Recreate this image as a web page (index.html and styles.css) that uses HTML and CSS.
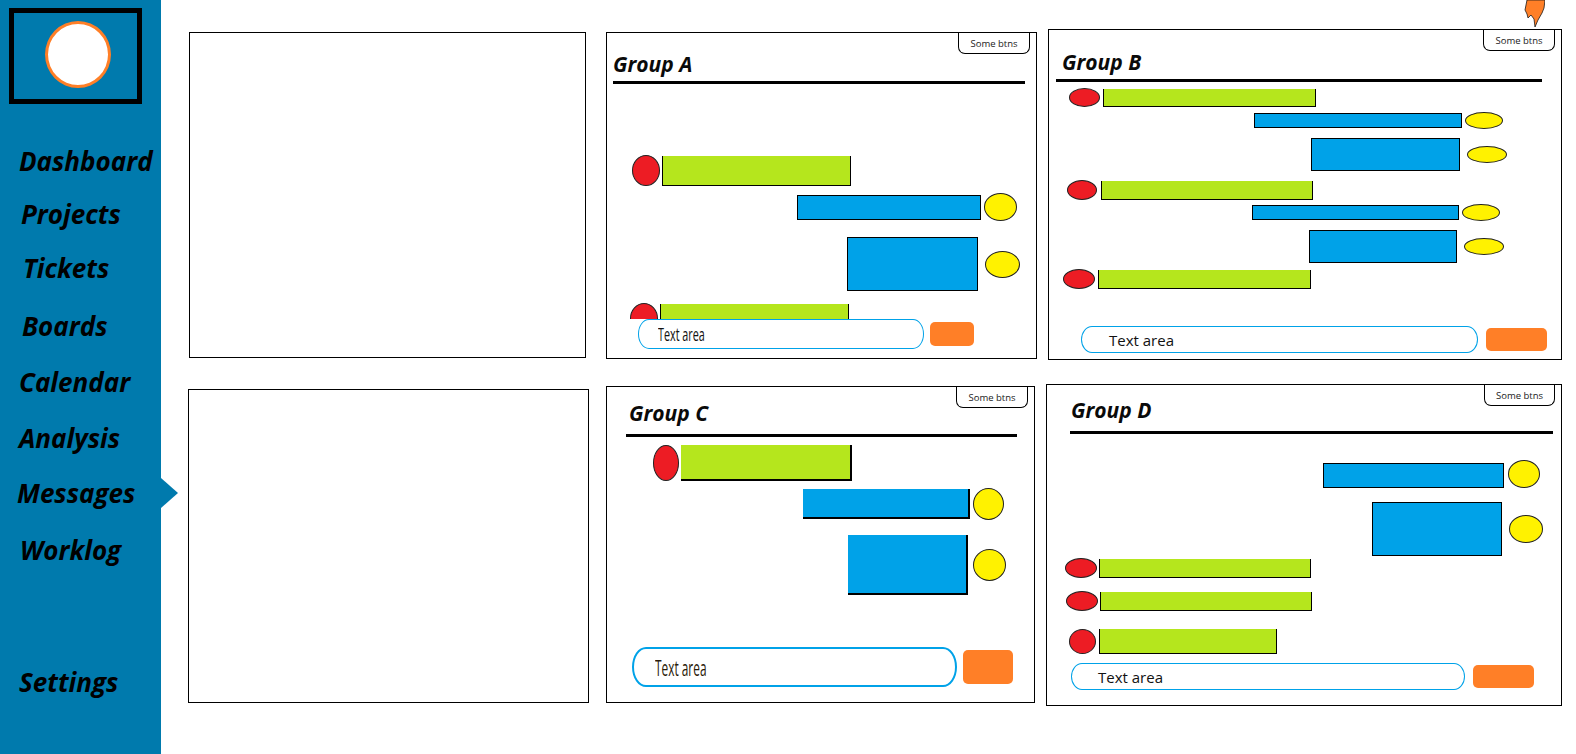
FILE: index.html
```html
<!DOCTYPE html>
<html lang="en">
<head>
<meta charset="utf-8">
<title>Messages</title>
<link rel="stylesheet" href="styles.css">
</head>
<body>
<div class="app">
  <aside class="sidebar">
    <div class="logo"><div class="logo-circle"></div></div>
    <nav class="nav">
      <a class="nav-item">Dashboard</a>
      <a class="nav-item nav-projects">Projects</a>
      <a class="nav-item nav-tickets">Tickets</a>
      <a class="nav-item nav-boards">Boards</a>
      <a class="nav-item">Calendar</a>
      <a class="nav-item">Analysis</a>
      <a class="nav-item nav-messages active">Messages</a>
      <a class="nav-item nav-worklog">Worklog</a>
      <a class="nav-item nav-settings">Settings</a>
    </nav>
  </aside>

  <main class="main">
    <div class="row">
      <section class="panel p-blank1"></section>

      <section class="panel group p-a">
        <div class="tab">Some btns</div>
        <h2 class="title">Group A</h2>
        <div class="rule"></div>
        <div class="msgs">
          <div class="msg" style="--t:71px;--l:25px;--g:2px"><span class="dot red" style="--w:28px;--h:31px"></span><span class="bar green" style="--w:189px;--h:30px"></span></div>
          <div class="msg" style="--t:7px;--l:190px;--g:3px"><span class="bar blue" style="--w:184px;--h:25px"></span><span class="dot yellow" style="--w:33px;--h:28px"></span></div>
          <div class="msg" style="--t:16px;--l:240px;--g:7px"><span class="bar blue" style="--w:131px;--h:54px"></span><span class="dot yellow" style="--w:35px;--h:27px"></span></div>
          <div class="msg" style="--t:12px;--l:23px;--g:2px"><span class="dot red" style="--w:28px;--h:31px"></span><span class="bar green" style="--w:189px;--h:30px"></span></div>
        </div>
        <div class="composer">
          <div class="textarea"><span class="ta-text squeeze">Text area</span></div>
          <div class="send"></div>
        </div>
      </section>

      <section class="panel group p-b">
        <div class="tab">Some btns</div>
        <h2 class="title">Group B</h2>
        <div class="rule"></div>
        <div class="msgs">
          <div class="msg" style="--t:6px;--l:20px;--g:3px"><span class="dot red" style="--w:31px;--h:19px"></span><span class="bar green" style="--w:213px;--h:18px"></span></div>
          <div class="msg" style="--t:5px;--l:205px;--g:3px"><span class="bar blue" style="--w:208px;--h:15px"></span><span class="dot yellow" style="--w:38px;--h:17px"></span></div>
          <div class="msg" style="--t:9px;--l:262px;--g:7px"><span class="bar blue" style="--w:149px;--h:33px"></span><span class="dot yellow" style="--w:40px;--h:17px"></span></div>
          <div class="msg" style="--t:9px;--l:18px;--g:4px"><span class="dot red" style="--w:30px;--h:20px"></span><span class="bar green" style="--w:212px;--h:19px"></span></div>
          <div class="msg" style="--t:4px;--l:203px;--g:3px"><span class="bar blue" style="--w:207px;--h:15px"></span><span class="dot yellow" style="--w:38px;--h:17px"></span></div>
          <div class="msg" style="--t:9px;--l:260px;--g:7px"><span class="bar blue" style="--w:148px;--h:33px"></span><span class="dot yellow" style="--w:40px;--h:17px"></span></div>
          <div class="msg" style="--t:6px;--l:14px;--g:3px"><span class="dot red" style="--w:32px;--h:20px"></span><span class="bar green" style="--w:213px;--h:19px"></span></div>
        </div>
        <div class="composer">
          <div class="textarea"><span class="ta-text">Text area</span></div>
          <div class="send"></div>
        </div>
      </section>
    </div>

    <div class="row">
      <section class="panel p-blank2"></section>

      <section class="panel group p-c">
        <div class="tab">Some btns</div>
        <h2 class="title">Group C</h2>
        <div class="rule"></div>
        <div class="msgs">
          <div class="msg" style="--t:8px;--l:46px;--g:2px"><span class="dot red" style="--w:26px;--h:36px"></span><span class="bar green thick" style="--w:171px;--h:36px"></span></div>
          <div class="msg" style="--t:7px;--l:196px;--g:3px"><span class="bar blue thick" style="--w:167px;--h:30px"></span><span class="dot yellow" style="--w:31px;--h:32px"></span></div>
          <div class="msg" style="--t:15px;--l:241px;--g:5px"><span class="bar blue thick" style="--w:120px;--h:60px"></span><span class="dot yellow" style="--w:33px;--h:32px"></span></div>
        </div>
        <div class="composer">
          <div class="textarea"><span class="ta-text squeeze">Text area</span></div>
          <div class="send"></div>
        </div>
      </section>

      <section class="panel group p-d">
        <div class="tab">Some btns</div>
        <h2 class="title">Group D</h2>
        <div class="rule"></div>
        <div class="msgs">
          <div class="msg" style="--t:25px;--l:276px;--g:4px"><span class="bar blue low" style="--w:181px;--h:25px"></span><span class="dot yellow" style="--w:32px;--h:28px"></span></div>
          <div class="msg" style="--t:14px;--l:325px;--g:7px"><span class="bar blue" style="--w:130px;--h:54px"></span><span class="dot yellow" style="--w:34px;--h:28px"></span></div>
          <div class="msg" style="--t:2px;--l:18px;--g:2px"><span class="dot red" style="--w:32px;--h:20px"></span><span class="bar green" style="--w:212px;--h:19px"></span></div>
          <div class="msg" style="--t:13px;--l:19px;--g:2px"><span class="dot red" style="--w:32px;--h:20px"></span><span class="bar green" style="--w:212px;--h:19px"></span></div>
          <div class="msg" style="--t:18px;--l:22px;--g:3px"><span class="dot red" style="--w:27px;--h:25px"></span><span class="bar green" style="--w:178px;--h:25px"></span></div>
        </div>
        <div class="composer">
          <div class="textarea"><span class="ta-text">Text area</span></div>
          <div class="send"></div>
        </div>
      </section>
    </div>
  </main>

  <svg class="flame" width="22" height="27" viewBox="0 0 22 27" aria-hidden="true">
    <path d="M4 0 L22 0 L21 8 L19 13 L15 20 L12 27 L11 19 L8 15 L5 18 L4 14 L2 10 Z" fill="#ff7f27" stroke="#1a1a1a" stroke-width="0.8"/>
  </svg>
</div>
</body>
</html>
```

FILE: styles.css
```css
html, body {
  margin: 0;
  padding: 0;
  background: #fff;
}

.app {
  position: relative;
  display: flex;
  width: 1576px;
  height: 754px;
  overflow: hidden;
  font-family: "Open Sans", "Noto Sans", sans-serif;
  color: #000;
}

/* ---------- sidebar ---------- */
.sidebar {
  flex: none;
  width: 161px;
  height: 754px;
  background: #007aad;
  display: flex;
  flex-direction: column;
}

.logo {
  box-sizing: border-box;
  width: 133px;
  height: 96px;
  margin: 8px 0 0 9px;
  border: 5px solid #000;
  display: flex;
  align-items: center;
  justify-content: center;
  padding: 0 0 4px 5px;
}

.logo-circle {
  box-sizing: border-box;
  width: 66px;
  height: 67px;
  border-radius: 50%;
  background: #fff;
  border: 3px solid #ff7f27;
}

.nav {
  display: flex;
  flex-direction: column;
  gap: 30px;
  margin-top: 44px;
}

.nav-item {
  position: relative;
  display: block;
  padding-left: 19px;
  font-style: italic;
  font-weight: 700;
  font-size: 26px;
  line-height: 26px;
  color: #000;
  text-decoration: none;
  white-space: nowrap;
}

.nav-projects { padding-left: 21px; margin-top: -3px; }
.nav-tickets  { padding-left: 23px; margin-top: -2px; }
.nav-boards   { padding-left: 22px; margin-top: 2px; }
.nav-messages { padding-left: 17px; margin-top: -1px; }
.nav-worklog  { padding-left: 20px; margin-top: 1px; }

.nav-item.active::after {
  content: "";
  position: absolute;
  left: 161px;
  top: 50%;
  margin-top: -15px;
  border-left: 17px solid #007aad;
  border-top: 15px solid transparent;
  border-bottom: 15px solid transparent;
}

.nav-settings {
  margin-top: 76px;
}

/* ---------- main ---------- */
.main {
  flex: 1;
  display: flex;
  flex-direction: column;
  gap: 24px;
  padding-top: 29px;
}

.row {
  display: flex;
  align-items: flex-start;
}

.panel {
  box-sizing: border-box;
  flex: none;
  position: relative;
  border: 1px solid #000;
  background: #fff;
}

.p-blank1 { width: 397px; height: 326px; margin: 3px 0 0 28px; }
.p-a      { width: 431px; height: 327px; margin: 3px 0 0 20px; }
.p-b      { width: 514px; height: 331px; margin: 0 0 0 11px; }
.p-blank2 { width: 401px; height: 314px; margin: 5px 0 0 27px; }
.p-c      { width: 429px; height: 317px; margin: 2px 0 0 17px; }
.p-d      { width: 516px; height: 322px; margin: 0 0 0 11px; }

.group {
  display: flex;
  flex-direction: column;
}

.tab {
  box-sizing: border-box;
  position: absolute;
  top: 0;
  right: 6px;
  width: 72px;
  height: 21px;
  border: 1px solid #000;
  border-top: 0;
  border-radius: 0 0 7px 7px;
  display: flex;
  align-items: center;
  justify-content: center;
  font-size: 9.5px;
  color: #1a1a1a;
  background: #fff;
}

.title {
  margin: 0;
  font-style: italic;
  font-weight: 700;
  font-size: 21px;
  line-height: 22px;
  color: #0a0a0a;
}

.rule {
  flex: none;
  height: 3px;
  background: #000;
}

.msgs {
  flex: 1;
  min-height: 0;
  overflow: hidden;
}

.msg {
  display: flex;
  align-items: center;
  gap: var(--g);
  margin: var(--t) 0 0 var(--l);
}

.dot,
.bar {
  flex: none;
  box-sizing: border-box;
  width: var(--w);
  height: var(--h);
}

.dot {
  border-radius: 50%;
  border: 1px solid #222;
}

.red { background: #ed1c24; }
.yellow { background: #fff200; }

.bar { border: 1px solid #000; }
.green { background: #b5e61d; border-top: 0; }
.blue { background: #00a2e8; }
.bar.thick { border-width: 0 2px 2px 0; }
.bar.low { margin-top: 4px; }

.composer {
  flex: none;
  display: flex;
  align-items: center;
  background: #fff;
}

.textarea {
  box-sizing: border-box;
  display: flex;
  align-items: center;
  border: 1px solid #00a2e8;
  border-radius: 11px / 50%;
  background: #fff;
  white-space: nowrap;
  overflow: hidden;
}

.ta-text {
  font-size: 15px;
  color: #111;
}

.ta-text.squeeze {
  display: inline-block;
  transform-origin: left center;
}

.send {
  flex: none;
  background: #ff7f27;
  border-radius: 5px;
}

/* ---- Group A ---- */
.p-a .tab { right: 6px; width: 72px; }
.p-a .title { margin: 20px 0 0 6px; }
.p-a .rule { margin: 6px 11px 0 6px; }
.p-a .composer { padding: 0 0 9px 31px; gap: 6px; }
.p-a .textarea { width: 286px; height: 30px; padding-left: 19px; }
.p-a .ta-text { font-size: 18px; transform: scaleX(0.6); }
.p-a .send { width: 44px; height: 24px; }

/* ---- Group B ---- */
.p-b .tab { right: 6px; width: 72px; }
.p-b .title { margin: 21px 0 0 13px; }
.p-b .rule { margin: 6px 19px 0 7px; }
.p-b .composer { padding: 0 0 6px 32px; gap: 8px; }
.p-b .textarea { width: 397px; height: 27px; padding-left: 27px; }
.p-b .send { width: 61px; height: 23px; }

/* ---- Group C ---- */
.p-c .tab { right: 6px; width: 72px; }
.p-c .title { margin: 15px 0 0 22px; }
.p-c .rule { margin: 10px 17px 0 19px; }
.p-c .composer { padding: 0 0 15px 25px; gap: 6px; }
.p-c .textarea { width: 325px; height: 40px; padding-left: 21px; border-width: 2px; border-radius: 14px / 50%; }
.p-c .ta-text { font-size: 22px; transform: scaleX(0.54); color: #2a1a08; }
.p-c .send { width: 50px; height: 34px; }

/* ---- Group D ---- */
.p-d .tab { right: 6px; width: 71px; }
.p-d .title { margin: 14px 0 0 24px; }
.p-d .rule { margin: 10px 8px 0 23px; }
.p-d .composer { padding: 0 0 15px 24px; gap: 8px; }
.p-d .textarea { width: 394px; height: 27px; padding-left: 26px; }
.p-d .send { width: 61px; height: 23px; }

/* ---------- decoration ---------- */
.flame {
  position: absolute;
  top: 0;
  right: 31px;
}
```
